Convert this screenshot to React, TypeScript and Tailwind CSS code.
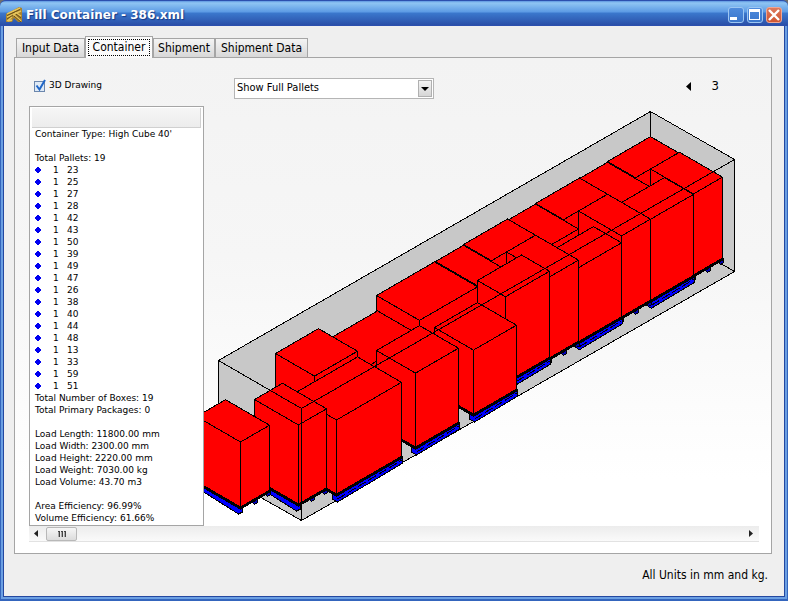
import { useState } from "react";

type Pallet = { x: number; y: number; a: number; b: number; h: number; base?: "long" | "short" };

const SLOPE = 0.579;

// Drawn in order, furthest pallet first. a runs up to the right, b runs down to the right.
const pallets: Pallet[] = [
  { x: 607, y: 161, a: 43, b: 28, h: 80 },
  { x: 650, y: 168.5, a: 29, b: 43, h: 81, base: "short" },
  { x: 579, y: 178, a: 28, b: 43, h: 80 },
  { x: 621, y: 202, a: 43, b: 29, h: 81, base: "long" },
  { x: 535, y: 203, a: 44, b: 28, h: 80 },
  { x: 578, y: 210.5, a: 29, b: 43, h: 81, base: "short" },
  { x: 507, y: 219.8, a: 28, b: 43, h: 80 },
  { x: 550, y: 251, a: 43, b: 28, h: 74, base: "long" },
  { x: 463, y: 244, a: 44, b: 28, h: 80 },
  { x: 506, y: 251.5, a: 29, b: 43, h: 81, base: "short" },
  { x: 435, y: 261, a: 28, b: 43, h: 80 },
  { x: 477, y: 280, a: 44, b: 28, h: 86, base: "long" },
  { x: 376, y: 295, a: 58, b: 43, h: 80 },
  { x: 434, y: 327, a: 43, b: 39, h: 64, base: "long" },
  { x: 319, y: 344, a: 58, b: 43, h: 80 },
  { x: 376, y: 350, a: 43, b: 39, h: 74, base: "long" },
  { x: 275, y: 353, a: 43, b: 39, h: 80 },
  { x: 292, y: 394, a: 65, b: 44, h: 74, base: "long" },
  { x: 254, y: 399, a: 28, b: 44, h: 79, base: "short" },
  { x: 196, y: 416, a: 29, b: 44, h: 65, base: "short" },
];

const palletIds = [23, 25, 27, 28, 42, 43, 50, 39, 49, 47, 26, 38, 40, 44, 48, 13, 33, 59, 51];

const tabs = [
  { name: "Input Data", width: "w-[69px]" },
  { name: "Container", width: "w-[68px]" },
  { name: "Shipment", width: "w-[62px]" },
  { name: "Shipment Data", width: "w-[93px]" },
];

function pts(list: number[][]) {
  return list.map((p) => p.map((n) => n.toFixed(1)).join(",")).join(" ");
}

function PalletBase({ x, y, a, b, h, base }: Pallet) {
  const left = [x, y + h];
  const front = [x + b, y + SLOPE * b + h];
  const right = [x + a + b, y + SLOPE * (b - a) + h];
  const block = (t: number) => {
    const cx = Math.round(front[0] + (right[0] - front[0]) * t);
    const cy = Math.round(front[1] + (right[1] - front[1]) * t);
    return pts([[cx - 3, cy], [cx - 3, cy + 4], [cx - 1, cy + 6], [cx + 2, cy + 4], [cx + 2, cy]]);
  };

  return (
    <g stroke="#000">
      {base === "long" ? (
        <>
          <polygon
            fill="#00f"
            points={pts([
              [front[0] - 4, front[1] - 2],
              [front[0] - 4, front[1] + 5],
              [front[0] + 1, front[1] + 8],
              [right[0] + 1, right[1] + 7],
              [right[0] + 1, right[1]],
            ])}
          />
          <polyline
            fill="none"
            strokeDasharray="9 3"
            points={pts([[front[0] + 1, front[1] + 5], [right[0], right[1] + 4]])}
          />
        </>
      ) : (
        <>
          <polygon
            fill="#00f"
            points={pts([
              [left[0], left[1]],
              [left[0], left[1] + 6],
              [front[0] - 2, front[1] + 7],
              [front[0] + 2, front[1] + 5],
              [front[0] + 2, front[1]],
            ])}
          />
          <polygon fill="#0000b0" points={block(0.5)} />
          <polygon fill="#0000b0" points={block(0.96)} />
        </>
      )}
      <polyline
        fill="none"
        strokeWidth="3"
        points={pts([[left[0], left[1] + 1], [front[0], front[1] + 1], [right[0], right[1] + 1]])}
      />
    </g>
  );
}

function PalletBox(p: Pallet) {
  const { x, y, a, b, h, base } = p;
  const A = [x, y];
  const B = [x + a, y - SLOPE * a];
  const C = [x + a + b, y + SLOPE * (b - a)];
  const D = [x + b, y + SLOPE * b];
  const down = (q: number[]) => [q[0], q[1] + h];

  return (
    <g>
      {base ? <PalletBase {...p} /> : null}
      <polygon fill="#f00" stroke="#000" points={pts([A, B, C, down(C), down(D), down(A)])} />
      <polyline fill="none" stroke="#000" points={pts([A, D, C])} />
      <polyline fill="none" stroke="#000" points={pts([D, down(D)])} />
    </g>
  );
}

function ContainerDrawing() {
  return (
    <svg
      className="block h-[420px] w-[555px] shrink-0"
      viewBox="203.5 105.5 555 420"
      shapeRendering="crispEdges"
      role="img"
      aria-label="3D drawing of the loaded container"
    >
      <polygon
        fill="#c8c8c8"
        stroke="#000"
        points="218,360 650,111 734,159 734,271 301,520 218,473"
      />
      <path d="M650 111V223L734 271" fill="none" stroke="#000" />
      {pallets.slice(0, -1).map((p) => (
        <PalletBox key={`${p.x}-${p.y}`} {...p} />
      ))}
      <path d="M218 360L301 408L734 159M301 408V520" fill="none" stroke="#000" />
      <PalletBox {...pallets[pallets.length - 1]} />
    </svg>
  );
}

function AppIcon() {
  return (
    <svg className="h-4 w-4" viewBox="0 0 16 16" aria-hidden="true">
      <path d="M0 7L13 0l3 1v14h-4L8 11l-2 4H0z" fill="#a8832f" />
      <path d="M1 7l13-6M1 10l14-6M1 14l5-4M7 7l8 7M9 5l6 4M2 14l4-1" stroke="#e6c55c" strokeWidth="1.4" />
      <path d="M1 8.500l13-6M1 12l6-4M8 9l7 6M10 7l5 4" stroke="#59400f" strokeWidth=".8" />
    </svg>
  );
}

function TitleBar() {
  const button = "grid h-4 w-4 place-items-center rounded-[3px] border";
  return (
    <header className="relative z-10 flex h-[26px] items-center rounded-t-md border-t border-b border-[#2c4fae] bg-[linear-gradient(#5d96e0,#8fc5f3_8%,#5c9ae4_46%,#3b78cd_50%,#2a4fa8)] pt-1 pr-[6px] pl-[6px]">
      <AppIcon />
      <h1 className="ml-1 flex-1 font-['DejaVu_Sans'] text-xs font-bold text-white [text-shadow:1px_1px_1px_#173a86]">
        Fill Container - 386.xml
      </h1>
      <div className="flex gap-[3px]">
        <button aria-label="Minimize" className={`${button} border-[#9cc6f2] bg-[linear-gradient(#4f8bdc,#3a76cc)]`}>
          <svg width="14" height="14" aria-hidden="true">
            <rect x="1" y="9" width="7" height="3" fill="#fff" />
          </svg>
        </button>
        <button aria-label="Maximize" className={`${button} border-[#9cc6f2] bg-[linear-gradient(#4f8bdc,#3a76cc)]`}>
          <svg width="14" height="14" aria-hidden="true">
            <path d="M1 1h11v11H1zM2 4v7h9V4z" fill="#fff" fillRule="evenodd" />
          </svg>
        </button>
        <button aria-label="Close" className={`${button} border-[#f0a692] bg-[linear-gradient(#dd7a5e,#cf5531)]`}>
          <svg width="14" height="14" aria-hidden="true">
            <path d="M2 2l10 10M12 2L2 12" stroke="#fff" strokeWidth="2.400" />
          </svg>
        </button>
      </div>
    </header>
  );
}

function ReportPanel() {
  return (
    <section className="h-[420px] w-[175px] shrink-0 border border-[#a5a5a5] bg-white font-['DejaVu_Sans'] text-[9px] leading-3">
      <div className="mx-[2px] mt-px h-5 border-r border-b border-[#d0d0d0] bg-[linear-gradient(#f6f6f6,#ececec)]" />
      <div className="pl-[5px] whitespace-nowrap">
        <p>Container Type: High Cube 40'</p>
        <p className="mt-3">Total Pallets: {palletIds.length}</p>
        <ul>
          {palletIds.map((id) => (
            <li key={id} className="flex items-center">
              <svg width="6" height="6" shapeRendering="crispEdges" aria-hidden="true">
                <path d="M2 0h2v1h1v1h1v2H5v1H4v1H2V5H1V4H0V2h1V1h1z" fill="#0000f0" />
              </svg>
              <span className="ml-3 w-[14px]">1</span>
              <span>{id}</span>
            </li>
          ))}
        </ul>
        <p>Total Number of Boxes: 19</p>
        <p>Total Primary Packages: 0</p>
        <p className="mt-3">Load Length: 11800.00 mm</p>
        <p>Load Width: 2300.00 mm</p>
        <p>Load Height: 2220.00 mm</p>
        <p>Load Weight: 7030.00 kg</p>
        <p>Load Volume: 43.70 m3</p>
        <p className="mt-3">Area Efficiency: 96.99%</p>
        <p>Volume Efficiency: 61.66%</p>
      </div>
    </section>
  );
}

function ScrollBar() {
  return (
    <div className="flex h-4 items-center border-b border-[#e2e2e2] bg-[linear-gradient(#ececec,#fafafa)]">
      <button aria-label="Scroll left" className="grid h-4 w-[17px] place-items-center pr-1">
        <svg width="4" height="7" aria-hidden="true">
          <path d="M4 0v7L0 3.500z" fill="#222" />
        </svg>
      </button>
      <button
        aria-label="Scroll position"
        className="grid h-[14px] w-[31px] place-items-center rounded-[2px] border border-[#b8b8b8] bg-[linear-gradient(#f6f6f6,#dcdcdc)]"
      >
        <svg width="8" height="6" shapeRendering="crispEdges" aria-hidden="true">
          <path d="M0 0h2v1H0zM3 0h2v1H3zM6 0h2v1H6zM1 1h1v5H1zM4 1h1v5H4zM7 1h1v5H7z" fill="#444" />
          <path d="M0 1h1v5H0zM3 1h1v5H3zM6 1h1v5H6z" fill="#aaa" />
        </svg>
      </button>
      <button aria-label="Scroll right" className="ml-auto grid h-4 w-[17px] place-items-center">
        <svg width="4" height="7" aria-hidden="true">
          <path d="M0 0v7l4-3.500z" fill="#222" />
        </svg>
      </button>
    </div>
  );
}

export default function App() {
  const [tab, setTab] = useState("Container");
  const [drawing, setDrawing] = useState(true);

  return (
    <div className="flex min-h-screen flex-col bg-[#6f6f6f] font-['DejaVu_Sans_Condensed','DejaVu_Sans',sans-serif] text-black">
      <div className="flex flex-1 flex-col rounded-t-md bg-[#3465bd]">
        <TitleBar />
        <main className="mx-1 mb-[5px] flex flex-1 flex-col bg-[#efefef] pt-[10px] pr-3 pl-[10px] shadow-[0_0_0_1px_#2448a0,0_0_0_3px_#6b9fe2]">
          <div role="tablist" className="flex items-end pl-[2px]">
            {tabs.map(({ name, width }) =>
              name === tab ? (
                <button
                  key={name}
                  role="tab"
                  aria-selected="true"
                  className={`relative z-10 -mb-px h-[22px] border border-b-0 border-[#a5a5a5] bg-[#fbfbfb] p-[2px] text-xs ${width}`}
                >
                  <span className="block h-[17px] border border-dotted border-black leading-[14px]">{name}</span>
                </button>
              ) : (
                <button
                  key={name}
                  role="tab"
                  aria-selected="false"
                  onClick={() => setTab(name)}
                  className={`h-[19px] border border-b-0 border-[#a5a5a5] bg-[linear-gradient(#f4f4f4,#d8d8d8)] text-xs whitespace-nowrap ${width}`}
                >
                  {name}
                </button>
              ),
            )}
          </div>

          <section className="flex flex-col border border-[#a5a5a5] bg-[linear-gradient(#f3f3f3,#f6f6f6_40%,#fff_85%)] pt-5 pr-3 pb-[11px] pl-[14px]">
            <div className="flex h-7 items-start">
              <label className="ml-[5px] flex h-4 w-[200px] items-center gap-1 font-['DejaVu_Sans'] text-[9px]">
                <span className="relative h-[11px] w-[11px]">
                  <input
                    type="checkbox"
                    checked={drawing}
                    onChange={(event) => setDrawing(event.target.checked)}
                    className="block h-[11px] w-[11px] appearance-none border border-[#6c87ad] bg-[#dfeaf6]"
                  />
                  {drawing ? (
                    <svg className="pointer-events-none absolute -top-[2px] left-0" width="13" height="13" aria-hidden="true">
                      <path d="M2.500 6.500l3 4L11 1" fill="none" stroke="#1f66c8" strokeWidth="2" />
                    </svg>
                  ) : null}
                </span>
                3D Drawing
              </label>
              <div className="relative w-[200px]">
                <select
                  aria-label="Drawing mode"
                  className="block h-[21px] w-full appearance-none border border-[#b5b5b5] bg-white pl-[2px] text-[11px]"
                >
                  <option>Show Full Pallets</option>
                </select>
                <span className="pointer-events-none absolute top-[2px] right-[2px] grid h-[17px] w-[14px] place-items-center border border-[#b0b0b0] bg-[linear-gradient(#f4f4f4,#d6d6d6)]">
                  <svg width="8" height="4" aria-hidden="true">
                    <path d="M0 0h8L4 4z" fill="#000" />
                  </svg>
                </span>
              </div>
              <div className="mr-10 ml-auto flex h-4 items-center gap-[21px] text-[13px]">
                <button aria-label="Previous container">
                  <svg width="5" height="9" aria-hidden="true">
                    <path d="M5 0v9L0 4.500z" fill="#000" />
                  </svg>
                </button>
                <output>3</output>
              </div>
            </div>

            <div className="flex overflow-hidden">
              <ReportPanel />
              {drawing ? <ContainerDrawing /> : null}
            </div>
            <ScrollBar />
          </section>

          <p className="mt-3 mr-1 text-right text-xs leading-[18px]">All Units in mm and kg.</p>
        </main>
      </div>
    </div>
  );
}
